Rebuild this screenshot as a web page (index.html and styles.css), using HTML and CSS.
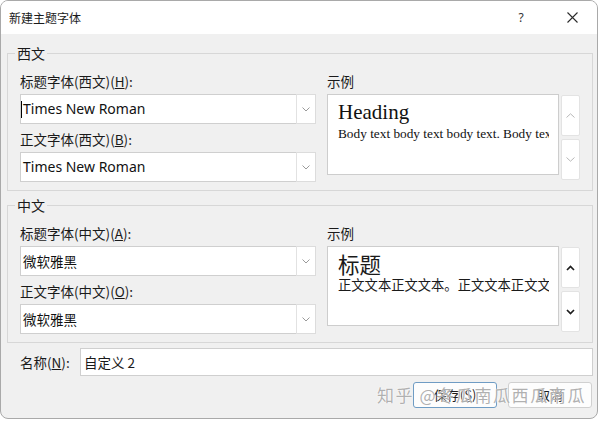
FILE: index.html
```html
<!DOCTYPE html>
<html lang="zh-CN">
<head>
<meta charset="utf-8">
<title>新建主题字体</title>
<link rel="stylesheet" href="styles.css">
</head>
<body>
<div class="window">
  <div class="titlebar">
    <span class="title">新建主题字体</span>
    <span class="help">?</span>
    <span class="close"><svg width="11" height="11" viewBox="0 0 11 11"><path d="M0.5 0.5L10.5 10.5M10.5 0.5L0.5 10.5" stroke="#2b2b2b" stroke-width="1.1" fill="none"/></svg></span>
  </div>
  <div class="body">
    <fieldset class="group">
      <legend>西文</legend>
      <div class="cols">
        <div class="fields">
          <div class="lbl">标题字体(西文)(<u>H</u>):</div>
          <div class="combo">
            <span class="val latin focused">Times New Roman</span>
            <span class="arrow"><svg width="8" height="5" viewBox="0 0 8 5"><path d="M0.5 0.5L4 4L7.5 0.5" stroke="#9a9a9a" stroke-width="1" fill="none"/></svg></span>
          </div>
          <div class="lbl second">正文字体(西文)(<u>B</u>):</div>
          <div class="combo">
            <span class="val latin">Times New Roman</span>
            <span class="arrow"><svg width="8" height="5" viewBox="0 0 8 5"><path d="M0.5 0.5L4 4L7.5 0.5" stroke="#9a9a9a" stroke-width="1" fill="none"/></svg></span>
          </div>
        </div>
        <div class="sample">
          <div class="lbl">示例</div>
          <div class="sample-row">
            <div class="preview">
              <div class="ph serif">Heading</div>
              <div class="pb serif">Body text body text body text. Body text body text.</div>
            </div>
            <div class="spin">
              <span class="sbtn dis"><svg width="9" height="5" viewBox="0 0 9 5"><path d="M0.5 4.5L4.5 0.8L8.5 4.5" stroke="#b8b8b8" stroke-width="1" fill="none"/></svg></span>
              <span class="sbtn dis"><svg width="9" height="5" viewBox="0 0 9 5"><path d="M0.5 0.5L4.5 4.2L8.5 0.5" stroke="#b8b8b8" stroke-width="1" fill="none"/></svg></span>
            </div>
          </div>
        </div>
      </div>
    </fieldset>

    <fieldset class="group">
      <legend>中文</legend>
      <div class="cols">
        <div class="fields">
          <div class="lbl">标题字体(中文)(<u>A</u>):</div>
          <div class="combo">
            <span class="val">微软雅黑</span>
            <span class="arrow"><svg width="8" height="5" viewBox="0 0 8 5"><path d="M0.5 0.5L4 4L7.5 0.5" stroke="#9a9a9a" stroke-width="1" fill="none"/></svg></span>
          </div>
          <div class="lbl second">正文字体(中文)(<u>O</u>):</div>
          <div class="combo">
            <span class="val">微软雅黑</span>
            <span class="arrow"><svg width="8" height="5" viewBox="0 0 8 5"><path d="M0.5 0.5L4 4L7.5 0.5" stroke="#9a9a9a" stroke-width="1" fill="none"/></svg></span>
          </div>
        </div>
        <div class="sample">
          <div class="lbl">示例</div>
          <div class="sample-row">
            <div class="preview cjk">
              <div class="ph">标题</div>
              <div class="pb">正文文本正文文本。正文文本正文文本。</div>
            </div>
            <div class="spin">
              <span class="sbtn"><svg width="9" height="6" viewBox="0 0 9 6"><path d="M1 5L4.5 1.5L8 5" stroke="#1e1e1e" stroke-width="1.7" fill="none"/></svg></span>
              <span class="sbtn"><svg width="9" height="6" viewBox="0 0 9 6"><path d="M1 1L4.5 4.5L8 1" stroke="#1e1e1e" stroke-width="1.7" fill="none"/></svg></span>
            </div>
          </div>
        </div>
      </div>
    </fieldset>

    <div class="name-row">
      <span class="name-lbl">名称(<u>N</u>):</span>
      <span class="name-input">自定义 2</span>
    </div>

    <div class="buttons">
      <span class="btn default">保存(<u>S</u>)</span>
      <span class="btn">取消</span>
      <span class="watermark">知乎 @冬瓜南瓜西瓜南瓜</span>
    </div>
  </div>
</div>
</body>
</html>
```

FILE: styles.css
```css
* {
  box-sizing: border-box;
}

html,
body {
  margin: 0;
  padding: 0;
  background: #ffffff;
}

body {
  font-family: "Noto Sans CJK SC", "Noto Sans", sans-serif;
  color: #1a1a1a;
}

.window {
  width: 598px;
  height: 419px;
  border: 1px solid #a9a9a9;
  border-radius: 8px;
  overflow: hidden;
  background: #f0f0f0;
  display: flex;
  flex-direction: column;
}

.titlebar {
  height: 33px;
  flex: none;
  background: #ffffff;
  display: flex;
  align-items: center;
  padding-left: 8px;
  padding-right: 10px;
  font-size: 12px;
  line-height: 16px;
}

.title {
  flex: 1;
}

.help {
  width: 20px;
  text-align: center;
  font-family: "Noto Sans", sans-serif;
  font-size: 12px;
  color: #333;
  margin-right: 26px;
}

.close {
  width: 30px;
  display: flex;
  justify-content: center;
  align-items: center;
}

.body {
  flex: 1;
  padding: 0 4px 0 6px;
  display: flex;
  flex-direction: column;
}

.group {
  margin: 11px 0 0;
  padding: 11px 11px 8px 12px;
  border: 1px solid #d7d7d7;
  min-width: 0;
}

.group + .group {
  margin-top: 6px;
}

.group legend {
  font-size: 14px;
  line-height: 16px;
  padding: 0 2px;
  margin-left: -5px;
  color: #1a1a1a;
}

.cols {
  display: grid;
  grid-template-columns: 296px 1fr;
  column-gap: 11px;
}

.lbl {
  font-size: 13.5px;
  line-height: 18px;
  height: 18px;
  white-space: nowrap;
}

.lbl.second {
  margin-top: 6px;
}

.combo {
  margin-top: 4px;
  height: 30px;
  display: flex;
}

.val {
  flex: 1;
  position: relative;
  background: #ffffff;
  border: 1px solid #cfcfcf;
  border-right: none;
  padding-left: 2px;
  font-size: 13.5px;
  line-height: 28px;
  color: #111;
  white-space: nowrap;
  overflow: hidden;
}

.val.latin {
  font-family: "Noto Sans", sans-serif;
  font-size: 14px;
}

.val.focused::before {
  content: "";
  position: absolute;
  left: 0;
  top: 6px;
  width: 1px;
  height: 17px;
  background: #000;
}

.arrow {
  width: 20px;
  background: #ffffff;
  border: 1px solid #dcdcdc;
  border-left: 1px solid #e2e2e2;
  display: flex;
  align-items: center;
  justify-content: center;
}

.sample-row {
  margin-top: 4px;
  display: flex;
  align-items: flex-start;
}

.preview {
  width: 232px;
  height: 81px;
  background: #ffffff;
  border: 1px solid #cdcdcd;
  padding: 5px 0 0 10px;
  overflow: hidden;
  white-space: nowrap;
}

.preview .ph {
  font-size: 21px;
  line-height: 24px;
}

.preview .pb {
  margin-top: 2px;
  font-size: 13.3px;
  line-height: 16px;
  width: 211px;
  overflow: hidden;
}

.serif {
  font-family: "Liberation Serif", serif;
  color: #111;
}

.preview.cjk {
  height: 80px;
  padding-top: 4px;
}

.preview.cjk .ph {
  font-size: 21.5px;
  line-height: 26px;
}

.preview.cjk .pb {
  margin-top: 0;
}

.spin {
  margin-left: 2px;
  margin-top: 1px;
  display: flex;
  flex-direction: column;
  gap: 3px;
}

.sbtn {
  width: 19px;
  height: 41px;
  background: #ffffff;
  border: 1px solid #e3e3e3;
  border-radius: 2px;
  display: flex;
  align-items: center;
  justify-content: center;
}

.name-row {
  margin-top: 5px;
  display: flex;
  align-items: center;
}

.name-lbl {
  width: 73px;
  padding-left: 13px;
  font-size: 13.5px;
  line-height: 18px;
}

.name-input {
  flex: 1;
  height: 28px;
  background: #ffffff;
  border: 1px solid #cfcfcf;
  padding-left: 3px;
  font-size: 13.5px;
  line-height: 26px;
}

.buttons {
  position: relative;
  margin-top: 6px;
  display: flex;
  justify-content: flex-end;
  gap: 11px;
  padding-right: 1px;
}

.btn {
  width: 84px;
  height: 26px;
  background: #fdfdfd;
  border: 1px solid #d0d0d0;
  border-radius: 3px;
  font-size: 13px;
  line-height: 24px;
  text-align: center;
  color: #1a1a1a;
}

.btn.default {
  border-color: #6f9cc4;
}

.watermark {
  position: absolute;
  right: 7px;
  top: 2px;
  font-size: 17px;
  line-height: 22px;
  color: rgba(150, 150, 150, 0.75);
  letter-spacing: 1.6px;
  text-shadow: 0 0 2px #ffffff, 0 0 1px #ffffff;
  white-space: nowrap;
  pointer-events: none;
}
```
